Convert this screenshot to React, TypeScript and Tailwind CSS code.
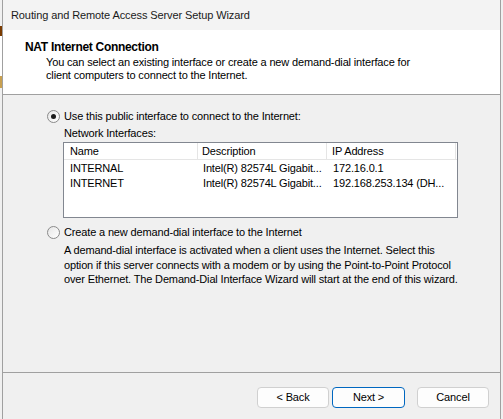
import React from "react";

const font = { fontFamily: '"Liberation Sans", Arial, sans-serif' };

function Radio({ checked }: { checked?: boolean }) {
  return (
    <div className="w-[13px] h-[13px] rounded-full border border-[#8a8a8a] bg-gradient-to-br from-[#e6e6e6] to-[#ffffff] flex items-center justify-center shrink-0">
      {checked && <div className="w-[5px] h-[5px] rounded-full bg-[#1a1a1a]" />}
    </div>
  );
}

export default function App() {
  return (
    <div className="w-[503px] h-[419px] flex bg-[#f0f0f0] text-black text-[11px] tracking-[-0.15px] whitespace-nowrap overflow-hidden" style={font}>
      <div className="w-[3px] h-full bg-[#f0f0f0] border-r border-[#a0a0a0] flex flex-col">
        <div className="h-[26px]" />
        <div className="h-[10px] bg-[#7a3b00] w-[2px]" />
        <div className="h-[40px] bg-white" />
        <div className="h-[12px] bg-[#c8a050] w-[2px]" />
        <div className="flex-1" />
      </div>
      <div className="w-[498px] h-full flex flex-col border-r border-[#a0a0a0]">
        <div className="h-[30px] bg-[#f3f3f3] flex items-center pl-[8px] text-[11px] tracking-[-0.1px] text-[#1a1a1a]">
          Routing and Remote Access Server Setup Wizard
        </div>
        <div className="h-[65px] bg-white pl-[22px] pt-[10px] border-b border-[#a0a0a0]">
          <div className="font-bold text-[12px] tracking-[-0.3px] leading-[14px]">NAT Internet Connection</div>
          <div className="pl-[21px] leading-[13px] mt-[2px]">
            You can select an existing interface or create a new demand-dial interface for
            <br />
            client computers to connect to the Internet.
          </div>
        </div>
        <div className="h-[278px] pl-[44px] pt-[15px] border-b border-[#a0a0a0]">
          <div className="flex items-center h-[13px]">
            <Radio checked />
            <span className="ml-[4px]">Use this public interface to connect to the Internet:</span>
          </div>
          <div className="pl-[17px] mt-[3px] leading-[14px]">Network Interfaces:</div>
          <div className="ml-[16px] mt-[2px] w-[395px] h-[76px] border border-[#828790] bg-white">
            <div className="flex h-[17px] border-b border-[#e5e5e5]">
              <div className="w-[134px] pl-[6px] border-r border-[#e5e5e5] flex items-center">Name</div>
              <div className="w-[129px] pl-[4px] border-r border-[#e5e5e5] flex items-center">Description</div>
              <div className="w-[129px] pl-[5px] border-r border-[#e5e5e5] flex items-center">IP Address</div>
            </div>
            <div className="flex h-[15px] mt-[1px] items-center">
              <div className="w-[135px] pl-[6px]">INTERNAL</div>
              <div className="w-[130px] pl-[4px]">Intel(R) 82574L Gigabit...</div>
              <div className="pl-[4px]">172.16.0.1</div>
            </div>
            <div className="flex h-[15px] items-center">
              <div className="w-[135px] pl-[6px]">INTERNET</div>
              <div className="w-[130px] pl-[4px]">Intel(R) 82574L Gigabit...</div>
              <div className="pl-[4px]">192.168.253.134 (DH...</div>
            </div>
          </div>
          <div className="flex items-center h-[13px] mt-[8px]">
            <Radio />
            <span className="ml-[4px]">Create a new demand-dial interface to the Internet</span>
          </div>
          <div className="pl-[17px] mt-[4px] leading-[14.5px]">
            A demand-dial interface is activated when a client uses the Internet. Select this
            <br />
            option if this server connects with a modem or by using the Point-to-Point Protocol
            <br />
            over Ethernet. The Demand-Dial Interface Wizard will start at the end of this wizard.
          </div>
        </div>
        <div className="flex-1 flex items-start pt-[14px] pl-[254px]">
          <button className="w-[72px] h-[21px] rounded-[4px] border border-[#d0d0d0] bg-[#fdfdfd] flex items-center justify-center">
            &lt; Back
          </button>
          <button className="ml-[3px] w-[73px] h-[21px] rounded-[4px] border border-[#0067c0] bg-[#fdfdfd] flex items-center justify-center">
            Next &gt;
          </button>
          <button className="ml-[12px] w-[72px] h-[21px] rounded-[4px] border border-[#d0d0d0] bg-[#fdfdfd] flex items-center justify-center">
            Cancel
          </button>
        </div>
      </div>
    </div>
  );
}
